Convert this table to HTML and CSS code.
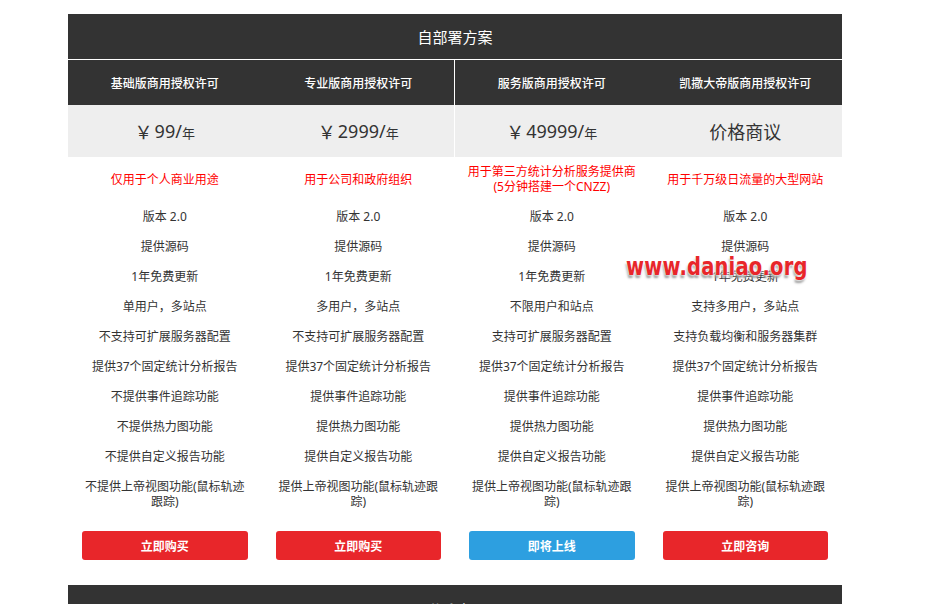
FILE: index.html
```html
<!DOCTYPE html>
<html lang="zh-CN">
<head>
<meta charset="utf-8">
<title>自部署方案</title>
<link rel="stylesheet" href="styles.css">
</head>
<body>
<div class="pricing">
  <div class="title-bar">自部署方案</div>
  <div class="plans">
    <div class="plan">
      <div class="plan-name">基础版商用授权许可</div>
      <div class="plan-price"><span class="cur">￥</span>99/<span class="unit">年</span></div>
      <div class="plan-desc">仅用于个人商业用途</div>
      <ul class="features">
        <li>版本 2.0</li>
        <li>提供源码</li>
        <li>1年免费更新</li>
        <li>单用户，多站点</li>
        <li>不支持可扩展服务器配置</li>
        <li>提供37个固定统计分析报告</li>
        <li>不提供事件追踪功能</li>
        <li>不提供热力图功能</li>
        <li>不提供自定义报告功能</li>
        <li>不提供上帝视图功能(鼠标轨迹<br>跟踪)</li>
      </ul>
      <a class="btn btn-red" href="#">立即购买</a>
    </div>
    <div class="plan plan-split">
      <div class="plan-name">专业版商用授权许可</div>
      <div class="plan-price"><span class="cur">￥</span>2999/<span class="unit">年</span></div>
      <div class="plan-desc">用于公司和政府组织</div>
      <ul class="features">
        <li>版本 2.0</li>
        <li>提供源码</li>
        <li>1年免费更新</li>
        <li>多用户，多站点</li>
        <li>不支持可扩展服务器配置</li>
        <li>提供37个固定统计分析报告</li>
        <li>提供事件追踪功能</li>
        <li>提供热力图功能</li>
        <li>提供自定义报告功能</li>
        <li>提供上帝视图功能(鼠标轨迹跟<br>踪)</li>
      </ul>
      <a class="btn btn-red" href="#">立即购买</a>
    </div>
    <div class="plan">
      <div class="plan-name">服务版商用授权许可</div>
      <div class="plan-price"><span class="cur">￥</span>49999/<span class="unit">年</span></div>
      <div class="plan-desc">用于第三方统计分析服务提供商<br>(5分钟搭建一个CNZZ)</div>
      <ul class="features">
        <li>版本 2.0</li>
        <li>提供源码</li>
        <li>1年免费更新</li>
        <li>不限用户和站点</li>
        <li>支持可扩展服务器配置</li>
        <li>提供37个固定统计分析报告</li>
        <li>提供事件追踪功能</li>
        <li>提供热力图功能</li>
        <li>提供自定义报告功能</li>
        <li>提供上帝视图功能(鼠标轨迹跟<br>踪)</li>
      </ul>
      <a class="btn btn-blue" href="#">即将上线</a>
    </div>
    <div class="plan">
      <div class="plan-name">凯撒大帝版商用授权许可</div>
      <div class="plan-price plan-price-text">价格商议</div>
      <div class="plan-desc">用于千万级日流量的大型网站</div>
      <ul class="features">
        <li>版本 2.0</li>
        <li>提供源码</li>
        <li>1年免费更新</li>
        <li>支持多用户，多站点</li>
        <li>支持负载均衡和服务器集群</li>
        <li>提供37个固定统计分析报告</li>
        <li>提供事件追踪功能</li>
        <li>提供热力图功能</li>
        <li>提供自定义报告功能</li>
        <li>提供上帝视图功能(鼠标轨迹跟<br>踪)</li>
      </ul>
      <a class="btn btn-red" href="#">立即咨询</a>
    </div>
  </div>
  <div class="title-bar title-bar-bottom">联系购买</div>
  <div class="watermark">www.daniao.org</div>
</div>
</body>
</html>
```

FILE: styles.css
```css
html, body {
  margin: 0;
  padding: 0;
  background: #fff;
}

body {
  font-family: "Noto Sans", "Noto Sans CJK SC", sans-serif;
  color: #333;
  overflow: hidden;
}

.pricing {
  position: relative;
  width: 774px;
  margin: 14px 0 0 68px;
}

.title-bar {
  height: 45px;
  background: #333;
  color: #fff;
  font-size: 15px;
  display: flex;
  align-items: center;
  justify-content: center;
  border-bottom: 1px solid #fff;
}

.title-bar-bottom {
  border-bottom: 0;
  align-items: flex-start;
  padding-top: 14px;
  box-sizing: border-box;
}

.plans {
  display: grid;
  grid-template-columns: repeat(4, 1fr);
  padding-bottom: 25px;
}

.plan {
  display: flex;
  flex-direction: column;
  align-items: stretch;
  text-align: center;
}

.plan-name {
  height: 45px;
  background: #333;
  color: #fff;
  font-size: 12px;
  font-weight: 500;
  display: flex;
  align-items: center;
  justify-content: center;
}

.plan-price {
  height: 52px;
  background: #eee;
  font-size: 18px;
  color: #333;
  display: flex;
  align-items: center;
  justify-content: center;
}

.plan-price .cur {
  margin-right: 2px;
}

.plan-price .unit {
  font-size: 13px;
  margin-top: 3px;
}

.plan-split .plan-name,
.plan-split .plan-price {
  box-shadow: inset -1px 0 0 #fff;
}

.plan-desc {
  height: 44px;
  display: flex;
  align-items: center;
  justify-content: center;
  color: #f00;
  font-size: 12px;
  line-height: 15px;
}

.features {
  list-style: none;
  margin: 0;
  padding: 0;
  font-size: 12px;
  line-height: 15px;
}

.features li {
  padding: 7.5px 6px;
}

.btn {
  display: flex;
  align-items: center;
  justify-content: center;
  height: 29px;
  margin: 15px 14px 0 14px;
  border-radius: 3px;
  color: #fff;
  text-decoration: none;
  font-size: 12px;
  font-weight: 600;
}

.btn-red {
  background: #e8262a;
}

.btn-blue {
  background: #2d9fe0;
}

.watermark {
  position: absolute;
  left: 558px;
  top: 238px;
  font-family: "DejaVu Sans", sans-serif;
  font-weight: bold;
  font-size: 19.5px;
  letter-spacing: 0.2px;
  color: #e8262a;
  transform: scaleY(1.3);
  transform-origin: left top;
  text-shadow: 0 0 2px #fff, 0 0 2px #fff, -1px 2px 2px #999;
  white-space: nowrap;
}
```
